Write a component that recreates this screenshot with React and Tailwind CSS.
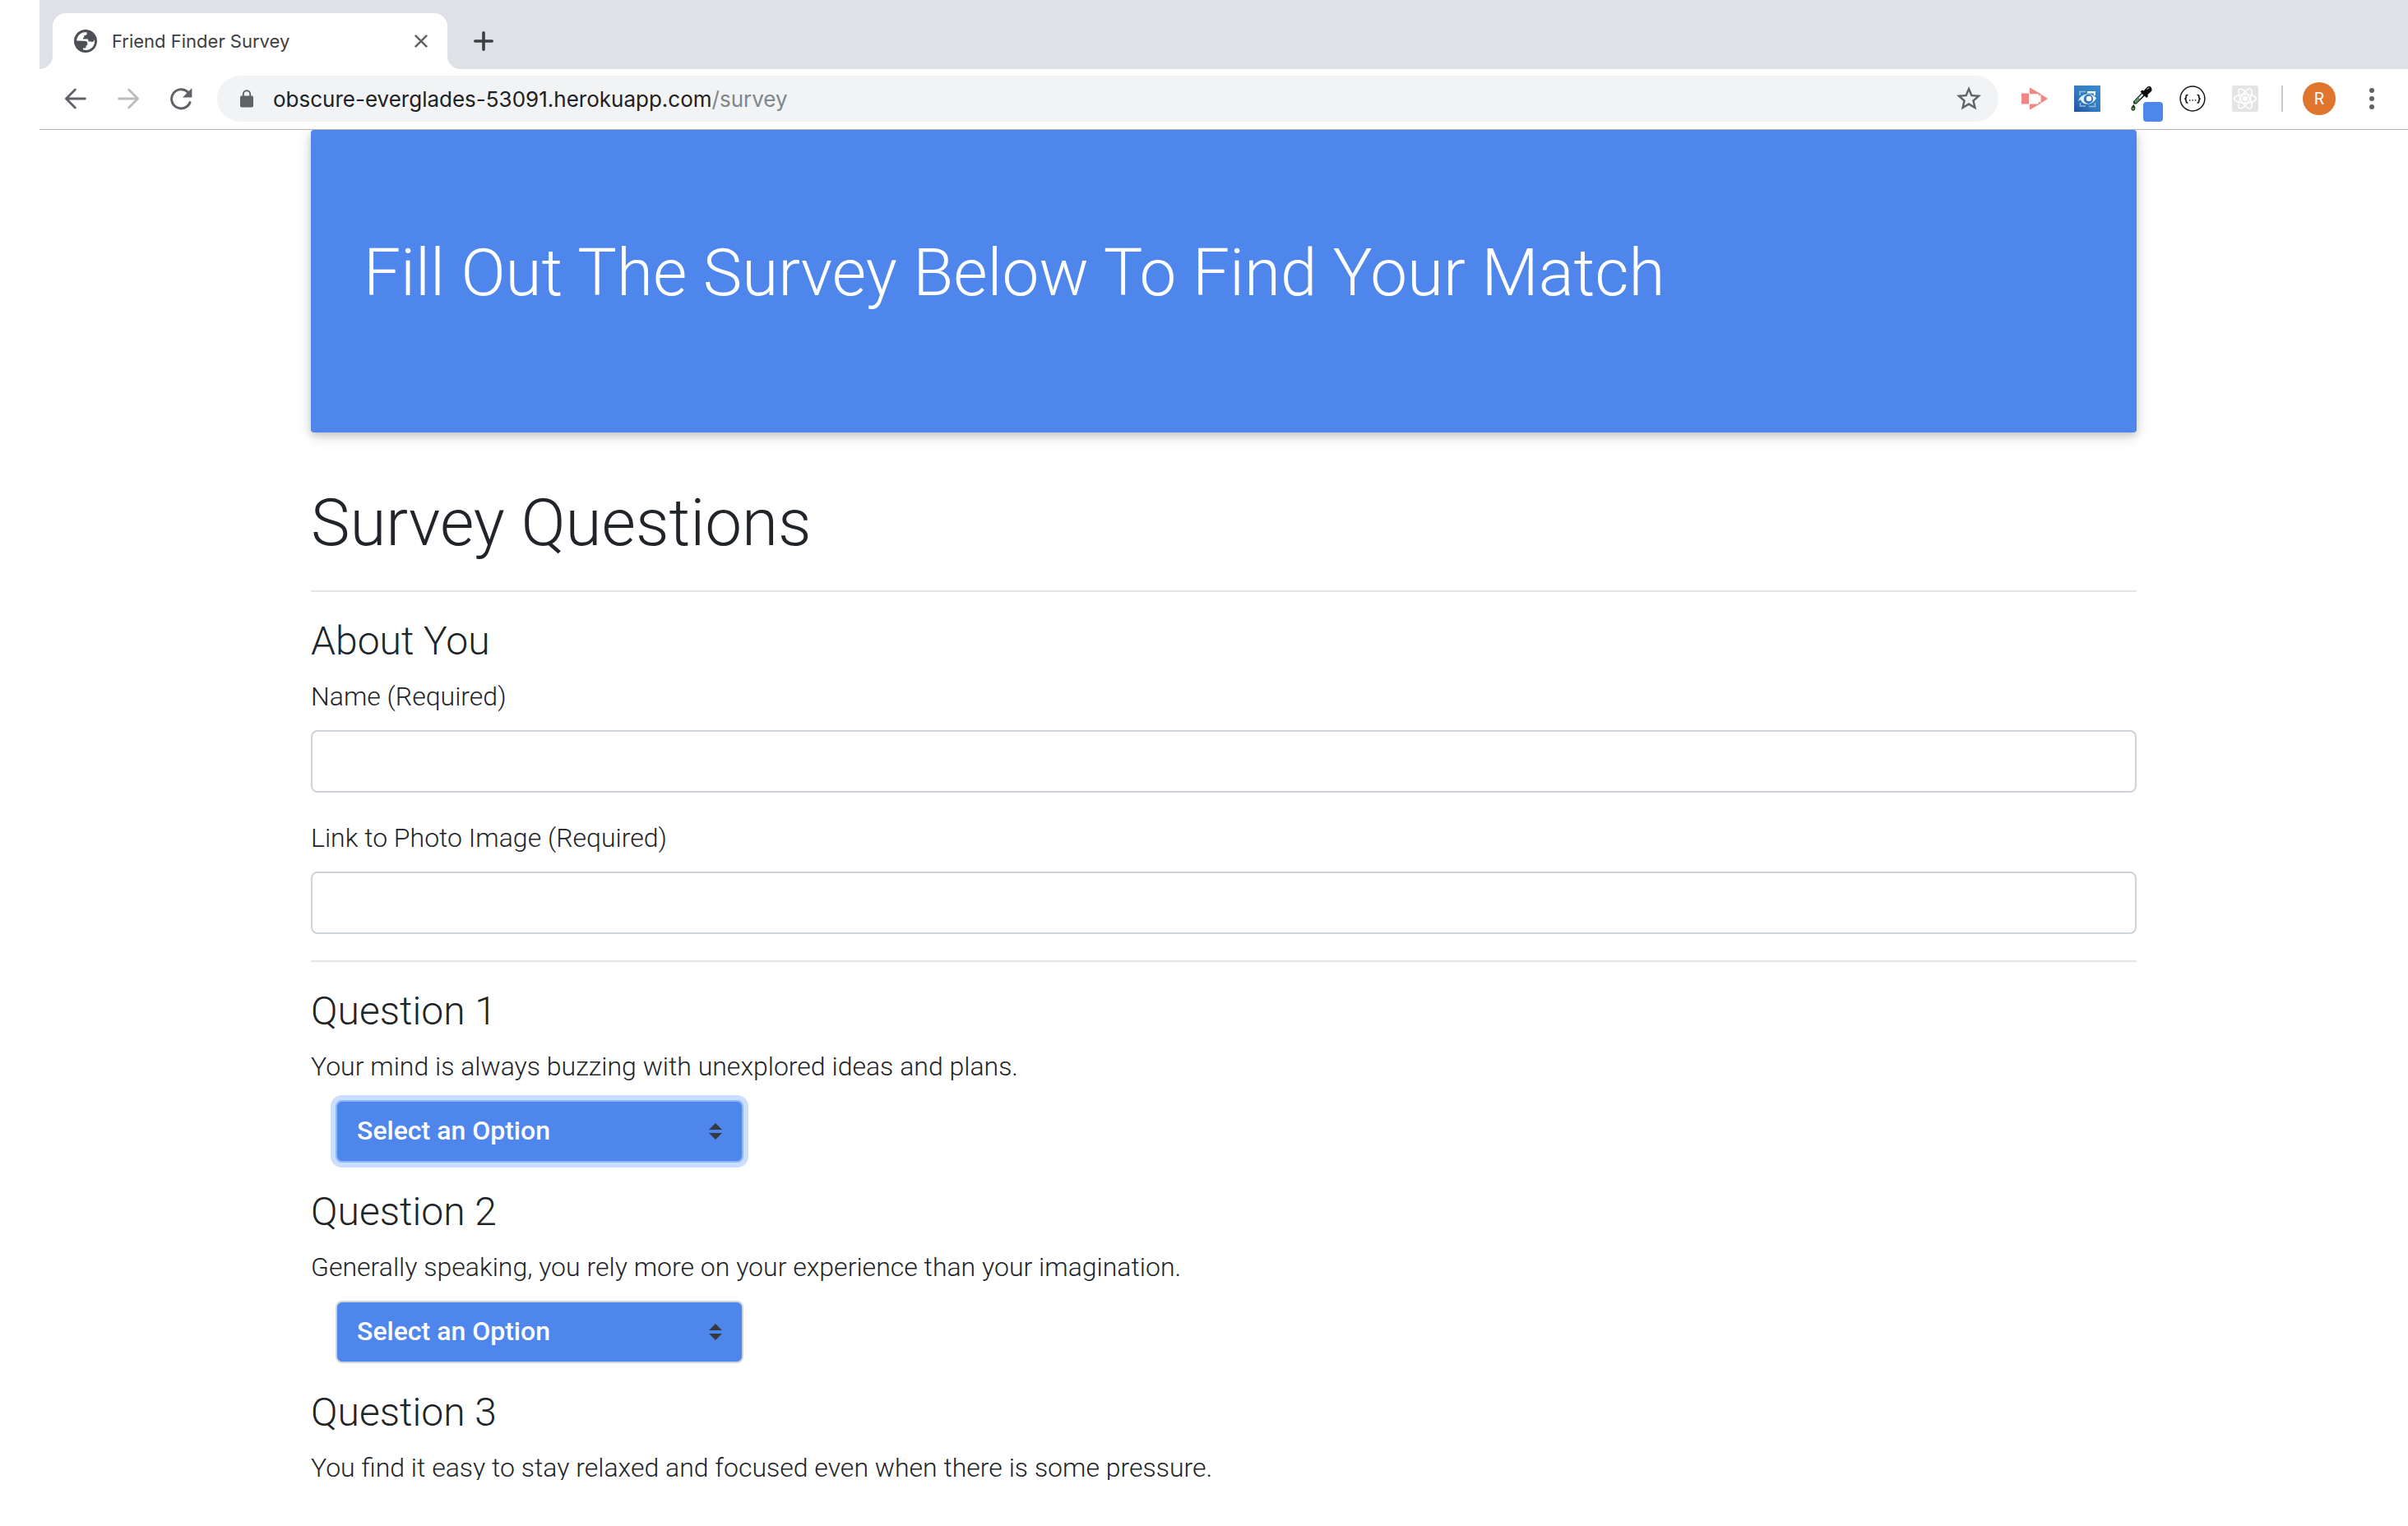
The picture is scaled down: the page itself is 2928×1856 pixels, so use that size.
import React from "react";
import { MdStarBorder } from "react-icons/md";

const GlobeIcon = () => (
  <svg className="size-7 shrink-0" viewBox="0 0 28 28" aria-hidden="true">
    <circle cx="14" cy="14" r="14" fill="#4d5156" />
    <path
      d="M3.2 13.6C3.4 9 6.6 4.9 11.2 3.6C12.8 3.1 14.4 3.1 15.6 3.3V5.2C15.6 6.4 14.6 6.9 13.4 6.9H12.4V8.6C12.4 9.4 11.8 9.8 11 9.9V11.4H16C17 11.4 17.4 12 17.4 12.8V14.4H20C21 14.4 22 15 22.6 16H24.8C24.2 20.8 20 24.8 14.6 24.9L11 24.4V22.6H13.2C14 22.6 14.6 22 14.6 21.2V19.4C16 19.2 16.4 18.4 16.4 17C16.4 15 15 13.8 12.6 13.8Z"
      fill="#fff"
    />
    <path d="M25 12.2C25.2 14.2 25 16 24.2 17.8L20.8 15.2L23.6 14.6Z" fill="#fff" />
  </svg>
);

const CloseIcon = () => (
  <svg className="size-4" viewBox="0 0 16 16" fill="none" stroke="#5f6368" strokeWidth="2.6" strokeLinecap="round" aria-hidden="true">
    <path d="M1.6 1.6L14.4 14.4M14.4 1.6L1.6 14.4" />
  </svg>
);

const PlusIcon = () => (
  <svg className="size-6" viewBox="0 0 24 24" fill="none" stroke="#3c4043" strokeWidth="3.6" strokeLinecap="round" aria-hidden="true">
    <path d="M12 1.8V22.2M1.8 12H22.2" />
  </svg>
);

const ArrowIcon = ({ forward }) => (
  <svg
    className={forward ? "size-7 rotate-180 text-[#babcbe]" : "size-7 text-[#5f6368]"}
    viewBox="0 0 28 28"
    fill="none"
    stroke="currentColor"
    strokeWidth="2.8"
    strokeLinecap="round"
    strokeLinejoin="round"
    aria-hidden="true"
  >
    <path d="M25.4 14H2.6M13.4 3L2.4 14L13.4 25" />
  </svg>
);

const ReloadIcon = () => (
  <svg className="size-7" viewBox="0 0 28 28" aria-hidden="true">
    <path d="M25 18.6A11.6 11.6 0 1 1 22.6 6.2" fill="none" stroke="#5f6368" strokeWidth="3" strokeLinecap="round" />
    <path d="M27.4 1V12.4H16Z" fill="#5f6368" />
  </svg>
);

const LockIcon = () => (
  <svg className="h-[22px] w-4 shrink-0" viewBox="0 0 16 22" aria-hidden="true">
    <rect x="0" y="7.6" width="16" height="14" rx="1.8" fill="#5f6368" />
    <path d="M3.8 8.5V5.4A4.2 4.2 0 0 1 12.2 5.4V8.5" fill="none" stroke="#5f6368" strokeWidth="1.9" />
  </svg>
);

const RecorderIcon = () => (
  <svg className="size-8" viewBox="0 0 32 32" aria-hidden="true">
    <path d="M0 9.5H9V22.5H0Z" fill="#f08784" />
    <path d="M10 2.5L24 10.6L21.5 12.8L20.4 10.2H10ZM10 22.4H20.4L21.5 19.6L24 21.4L10 29.4Z" fill="#f08784" />
    <path d="M23.6 10.4L32 16L23.6 21.4Z" fill="#f08784" />
  </svg>
);

const EyeCaptureIcon = () => (
  <svg className="size-8" viewBox="0 0 32 32" aria-hidden="true">
    <defs>
      <linearGradient id="eyeBg" x1="1" y1="0" x2="0" y2="1">
        <stop offset="0" stopColor="#3d8bce" />
        <stop offset="0.6" stopColor="#3178bd" />
        <stop offset="1" stopColor="#2450a0" />
      </linearGradient>
    </defs>
    <rect width="32" height="32" fill="url(#eyeBg)" />
    <path d="M7 12V7.5H14M25.5 21V25.5H18M14 25H7.5V21" fill="none" stroke="#8fbce2" strokeWidth="1.6" />
    <path d="M16 7H26V12H24V9.5H16Z" fill="#fff" />
    <path d="M5 19C6.5 13 12 10.5 17 10.5C22 10.5 25.5 13 27 15.5C24.5 20 21 22.5 16.5 22.5C11.5 22.5 8.5 20.5 8 17Z" fill="#e3eff9" />
    <circle cx="17.4" cy="16.4" r="5.6" fill="#2f77bd" />
    <circle cx="18" cy="16" r="3.2" fill="#fff" />
  </svg>
);

const PipetteIcon = () => (
  <svg className="size-8" viewBox="0 0 32 32" aria-hidden="true">
    <path d="M8.4 22.4L8 19.6L19.4 7.6L23 11.4L11.6 22.6Z" fill="#111" />
    <path d="M10.4 20.4L19.6 10.8" stroke="#e4efe4" strokeWidth="2.4" />
    <path d="M10 21L15.4 15.6" stroke="#4f9a5a" strokeWidth="2.4" />
    <path d="M16.6 7.4L18.8 5.6L20.6 6.4L24.2 2.4C26 0.6 28.6 0.8 29.8 2.4C31 4.2 30.8 6.2 29.2 7.8L25.4 11.2L26 13L24 15Z" fill="#0b0b0b" />
    <path d="M24.8 4.4L27 2.8" stroke="#9a9a9a" strokeWidth="1.3" strokeLinecap="round" />
    <path d="M8.2 23C10 25 10.6 26.4 10.4 28C10.2 29.8 9 30.8 7.8 30.8C6.4 30.8 5.4 29.8 5.4 28C5.4 26.4 6.6 25 8.2 23Z" fill="#1c2a1e" />
    <circle cx="7.8" cy="28" r="1.5" fill="#5aa564" />
  </svg>
);

const JsonIcon = () => (
  <svg className="size-8" viewBox="0 0 32 32" aria-hidden="true">
    <circle cx="16" cy="16" r="14.9" fill="#fff" stroke="#1a1a1a" strokeWidth="1.5" />
    <path
      d="M10.4 11.4C8.4 11.4 8.2 12 8.2 13.4C8.2 15.2 8 16 6.4 16.2C8 16.4 8.2 17.2 8.2 19C8.2 20.6 8.4 21.2 10.4 21.2M21.6 11.4C23.6 11.4 23.8 12 23.8 13.4C23.8 15.2 24 16 25.6 16.2C24 16.4 23.8 17.2 23.8 19C23.8 20.6 23.6 21.2 21.6 21.2"
      fill="none"
      stroke="#1a1a1a"
      strokeWidth="1.7"
    />
    <path d="M12 18H13.4M15.4 18H16.8M18.8 18H20.2" stroke="#1a1a1a" strokeWidth="1.5" />
  </svg>
);

const AtomIcon = () => (
  <svg className="size-8" viewBox="0 0 32 32" aria-hidden="true">
    <rect width="32" height="32" rx="2.5" fill="#e4e4e4" />
    <g fill="none" stroke="#fff" strokeWidth="1.5">
      <ellipse cx="16" cy="16" rx="13.4" ry="5.2" />
      <ellipse cx="16" cy="16" rx="13.4" ry="5.2" transform="rotate(60 16 16)" />
      <ellipse cx="16" cy="16" rx="13.4" ry="5.2" transform="rotate(120 16 16)" />
    </g>
    <circle cx="16" cy="16" r="3" fill="#fff" />
  </svg>
);

const TabFlare = ({ className }) => (
  <svg className={className} viewBox="0 0 16 16" fill="#fff" aria-hidden="true">
    <path d="M16 0V16H0C8.8 16 16 8.8 16 0Z" />
  </svg>
);

const extensions = [
  { label: "Screen recorder", icon: <RecorderIcon /> },
  { label: "Page capture", icon: <EyeCaptureIcon /> },
  { label: "Color picker", icon: <PipetteIcon />, swatch: true },
  { label: "JSON viewer", icon: <JsonIcon /> },
  { label: "React developer tools", icon: <AtomIcon /> },
];

const questions = [
  { id: 1, text: "Your mind is always buzzing with unexplored ideas and plans.", active: true },
  { id: 2, text: "Generally speaking, you rely more on your experience than your imagination." },
  { id: 3, text: "You find it easy to stay relaxed and focused even when there is some pressure." },
];

function TabStrip() {
  return (
    <div className="flex h-[84px] shrink-0 items-center bg-[#dee1e6] pt-4 pl-4">
      <div className="relative flex h-full w-[480px] items-center rounded-t-2xl bg-white pr-6 pl-[26px]">
        <TabFlare className="absolute right-full bottom-0 size-4" />
        <TabFlare className="absolute bottom-0 left-full size-4 -scale-x-100" />
        <GlobeIcon />
        <span className="ml-[18px] flex-1 text-[22px] text-[#3c4043]">Friend Finder Survey</span>
        <button type="button" aria-label="Close tab">
          <CloseIcon />
        </button>
      </div>
      <button type="button" aria-label="New tab" className="ml-6 flex w-10 justify-center">
        <PlusIcon />
      </button>
    </div>
  );
}

function Toolbar() {
  return (
    <div className="flex shrink-0 items-center border-b border-[#b0b2b5] bg-white px-3 pt-2 pb-[9px]">
      <button type="button" aria-label="Back" className="flex w-16 justify-center">
        <ArrowIcon />
      </button>
      <button type="button" aria-label="Forward" className="flex w-16 justify-center">
        <ArrowIcon forward />
      </button>
      <button type="button" aria-label="Reload" className="flex w-16 justify-center">
        <ReloadIcon />
      </button>
      <div className="mx-3 flex h-14 flex-1 items-center rounded-full bg-[#f1f3f4] pr-[18px] pl-7">
        <LockIcon />
        <p className="ml-6 flex-1 text-[26px] text-[#202124]">
          obscure-everglades-53091.herokuapp.com<span className="text-[#80868b]">/survey</span>
        </p>
        <button type="button" aria-label="Bookmark this page">
          <MdStarBorder className="size-9 text-[#5f6368]" />
        </button>
      </div>
      {extensions.map((ext) => (
        <button key={ext.label} type="button" aria-label={ext.label} className="relative flex w-16 justify-center">
          {ext.icon}
          {ext.swatch && <span className="absolute top-5 left-9 size-6 rounded bg-[#4f86ec]" />}
        </button>
      ))}
      <div className="ml-3 h-8 w-0.5 bg-[#c9cbce]" />
      <button
        type="button"
        aria-label="Profile"
        className="ml-6 flex size-10 items-center justify-center rounded-full bg-[#e0752d] font-[Roboto] text-xl text-white"
      >
        R
      </button>
      <button type="button" aria-label="Menu" className="ml-3 flex w-16 flex-col items-center gap-1">
        <span className="size-1.5 rounded-full bg-[#5f6368]" />
        <span className="size-1.5 rounded-full bg-[#5f6368]" />
        <span className="size-1.5 rounded-full bg-[#5f6368]" />
      </button>
    </div>
  );
}

function TextField({ id, label }) {
  return (
    <div className="mb-8">
      <label htmlFor={id} className="mb-[18px] block leading-[46px]">
        {label}
      </label>
      <input
        id={id}
        type="text"
        className="block h-[76px] w-full rounded-lg border-2 border-[#ced4da] bg-white px-6 outline-none"
      />
    </div>
  );
}

function Question({ id, text, active }) {
  return (
    <section className="mb-8">
      <h4 className="mb-4 text-5xl leading-[56px]">Question {id}</h4>
      <label htmlFor={`q${id}`} className="mb-[18px] block leading-[46px]">
        {text}
      </label>
      <div className="relative ml-[30px] w-[496px]">
        <select
          id={`q${id}`}
          className={
            active
              ? "block h-[76px] w-full appearance-none rounded-lg border-2 border-[#86b7fe] bg-[#4f86ec] pr-12 pb-0.5 pl-6 font-medium text-white ring-[6px] ring-[#cadeff] outline-none"
              : "block h-[76px] w-full appearance-none rounded-lg border-2 border-[#ced4da] bg-[#4f86ec] pr-12 pb-0.5 pl-6 font-medium text-white outline-none"
          }
        >
          <option>Select an Option</option>
          <option>1 (Strongly Disagree)</option>
          <option>2</option>
          <option>3</option>
          <option>4</option>
          <option>5 (Strongly Agree)</option>
        </select>
        <svg className="pointer-events-none absolute inset-y-7 right-[26px] h-5 w-4" viewBox="0 0 4 5" fill="#343a40" aria-hidden="true">
          <path d="M2 0L0 2h4zm0 5L0 3h4z" />
        </svg>
      </div>
    </section>
  );
}

export default function App() {
  return (
    <div className="flex h-screen flex-col overflow-hidden bg-white pb-14 pl-12 font-[Inter,sans-serif]">
      <TabStrip />
      <Toolbar />
      <main className="min-h-0 flex-1 overflow-hidden font-[Roboto,sans-serif] text-[32px] font-light text-[#212529]">
        <div className="mx-auto max-w-[2220px]">
          <header className="mb-16 rounded bg-[#4f86ec] px-16 py-32 text-white shadow-[0_4px_10px_rgba(0,0,0,0.16),0_4px_20px_rgba(0,0,0,0.12)]">
            <h1 className="mb-5 text-[80px] leading-[92px]">Fill Out The Survey Below To Find Your Match</h1>
          </header>
          <h2 className="mb-9 text-[80px] leading-[92px]">Survey Questions</h2>
          <hr className="mb-8 border-t-2 border-[#e5e5e5]" />
          <form>
            <h4 className="mb-4 text-5xl leading-[56px]">About You</h4>
            <TextField id="name" label="Name (Required)" />
            <TextField id="photo" label="Link to Photo Image (Required)" />
            <hr className="my-8 border-t-2 border-[#e5e5e5]" />
            {questions.map((q) => (
              <Question key={q.id} {...q} />
            ))}
          </form>
        </div>
      </main>
    </div>
  );
}
